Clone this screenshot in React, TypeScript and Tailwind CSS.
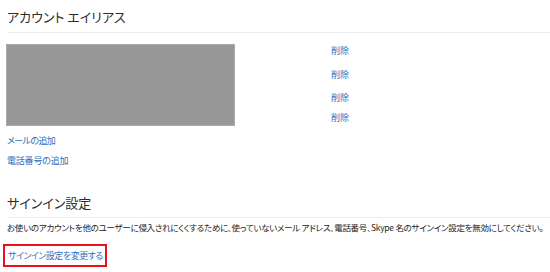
export default function App() {
  const deleteLinks = ["mt-[1px]", "mt-[12px]", "mt-[11px]", "mt-[8px]"];
  return (
    <div className="w-[550px] h-[272px] bg-white overflow-hidden font-['Noto_Sans_CJK_JP',sans-serif] [font-feature-settings:'palt']">
      {/* アカウント エイリアス */}
      <h2 className="pl-[7px] pt-[8px] text-[13px] leading-[17px] font-normal text-[#2b2b2b]">
        アカウント エイリアス
      </h2>
      <div className="mt-[7px] ml-[7px] h-px bg-[#ededed]" />

      <div className="flex mt-[11px]">
        <div className="ml-[6px] w-[229px] h-[82px] bg-[#979797] border border-[#ababab]" />
        <div className="ml-[96px] flex flex-col">
          {deleteLinks.map((m, i) => (
            <a
              key={i}
              href="#"
              className={`${m} text-[9px] leading-[12px] text-[#2f6fbd]`}
            >
              削除
            </a>
          ))}
        </div>
      </div>

      <div className="pl-[7px] flex flex-col items-start">
        <a href="#" className="mt-[9px] text-[9px] leading-[12px] tracking-[-0.6px] text-[#2f6fbd]">
          メールの追加
        </a>
        <a href="#" className="mt-[8px] text-[9px] leading-[12px] tracking-[-0.2px] text-[#2f6fbd]">
          電話番号の追加
        </a>
      </div>

      {/* サインイン設定 */}
      <h2 className="mt-[27px] pl-[7px] text-[13px] leading-[17px] font-normal text-[#2b2b2b]">
        サインイン設定
      </h2>
      <div className="mt-[6px] ml-[7px] h-px bg-[#ededed]" />
      <p className="mt-[3px] pl-[7px] text-[8.5px] leading-[12px] tracking-[-0.28px] text-[#222] whitespace-nowrap">
        お使いのアカウントを他のユーザーに侵入されにくくするために、使っていないメール アドレス、電話番号、Skype 名のサインイン設定を無効にしてください。
      </p>
      <div className="mt-[11px] ml-[3px] w-[104px] h-[23px] border-2 border-[#e8101a] flex items-center pl-[3px]">
        <a href="#" className="text-[9px] leading-[12px] tracking-[-0.5px] text-[#2f6fbd] whitespace-nowrap">
          サインイン設定を変更する
        </a>
      </div>
    </div>
  );
}
